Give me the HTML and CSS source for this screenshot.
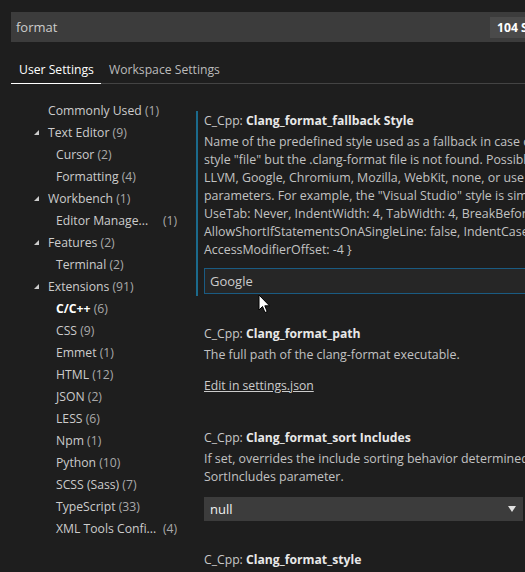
FILE: index.html
```html
<!DOCTYPE html>
<html lang="en">

<head>
    <meta charset="UTF-8">
    <title>Settings</title>
    <link rel="stylesheet" href="styles.css">
</head>

<body>

    <!-- search -->
    <div class="search">
        <div class="search_box">
            <span class="query">format</span>
            <span class="count">104 Settings found</span>
        </div>
    </div>

    <!-- tabs -->
    <div class="tabs">
        <div class="tab active">User Settings</div>
        <div class="tab">Workspace Settings</div>
    </div>

    <div class="main">

        <!-- tree -->
        <ul class="tree">
            <li class="lv1">Commonly Used <span class="num">(1)</span></li>
            <li class="lv1 open">Text Editor <span class="num">(9)</span></li>
            <li class="lv2">Cursor <span class="num">(2)</span></li>
            <li class="lv2">Formatting <span class="num">(4)</span></li>
            <li class="lv1 open">Workbench <span class="num">(1)</span></li>
            <li class="lv2"><span class="cut">Editor Manage...</span><span class="num">(1)</span></li>
            <li class="lv1 open">Features <span class="num">(2)</span></li>
            <li class="lv2">Terminal <span class="num">(2)</span></li>
            <li class="lv1 open">Extensions <span class="num">(91)</span></li>
            <li class="lv2 selected"><b>C/C++</b> <span class="num">(6)</span></li>
            <li class="lv2">CSS <span class="num">(9)</span></li>
            <li class="lv2">Emmet <span class="num">(1)</span></li>
            <li class="lv2">HTML <span class="num">(12)</span></li>
            <li class="lv2">JSON <span class="num">(2)</span></li>
            <li class="lv2">LESS <span class="num">(6)</span></li>
            <li class="lv2">Npm <span class="num">(1)</span></li>
            <li class="lv2">Python <span class="num">(10)</span></li>
            <li class="lv2">SCSS (Sass) <span class="num">(7)</span></li>
            <li class="lv2">TypeScript <span class="num">(33)</span></li>
            <li class="lv2"><span class="cut">XML Tools Confi...</span><span class="num">(4)</span></li>
        </ul>

        <!-- settings list -->
        <div class="settings">

            <div class="setting focused">
                <div class="title">C_Cpp: <b>Clang_format_fallback Style</b></div>
                <div class="desc">
                    Name of the predefined style used as a fallback in case clang-format is invoked with<br>
                    style "file" but the .clang-format file is not found. Possible values are Visual Studio,<br>
                    LLVM, Google, Chromium, Mozilla, WebKit, none, or use {key: value, ...} to set specific<br>
                    parameters. For example, the "Visual Studio" style is similar to: { BasedOnStyle: LLVM,<br>
                    UseTab: Never, IndentWidth: 4, TabWidth: 4, BreakBeforeBraces: Allman,<br>
                    AllowShortIfStatementsOnASingleLine: false, IndentCaseLabels: false, ColumnLimit: 0,<br>
                    AccessModifierOffset: -4 }
                </div>
                <div class="text_input">Google</div>
            </div>

            <div class="setting s2">
                <div class="title">C_Cpp: <b>Clang_format_path</b></div>
                <div class="desc">The full path of the clang-format executable.</div>
                <div class="link">Edit in settings.json</div>
            </div>

            <div class="setting s3">
                <div class="title">C_Cpp: <b>Clang_format_sort Includes</b></div>
                <div class="desc">
                    If set, overrides the include sorting behavior determined by the<br>
                    SortIncludes parameter.
                </div>
                <div class="select">
                    <span>null</span>
                    <span class="arrow"></span>
                </div>
            </div>

            <div class="setting">
                <div class="title">C_Cpp: <b>Clang_format_style</b></div>
            </div>

        </div>
    </div>

    <!-- mouse pointer -->
    <svg class="pointer" width="13" height="20" viewBox="0 0 13 20">
        <path d="M1 1 L1 16 L4.5 12.5 L7 18.5 L9.2 17.6 L6.8 11.8 L11.5 11.8 Z" fill="#fff" stroke="#000" stroke-width="1"/>
    </svg>

</body>

</html>
```

FILE: styles.css
```css
body {
    margin: 0;
    width: 525px;
    height: 572px;
    overflow: hidden;
    background-color: #1e1e1e;
    color: #cccccc;
    font-family: "Open Sans", "Noto Sans", sans-serif;
    font-size: 12.2px;
    position: relative;
}

/* search */
.search {
    padding: 12px 0 0 11px;
}

.search_box {
    width: 620px;
    height: 30px;
    background-color: #3c3c3c;
    display: flex;
    align-items: center;
}

.query {
    width: 474px;
    padding-left: 5px;
    font-size: 13px;
    color: #cccccc;
}

.count {
    height: 21px;
    line-height: 21px;
    padding: 0 7px;
    background-color: #4a4a4a;
    color: #ffffff;
    font-weight: bold;
    white-space: nowrap;
}

/* tabs */
.tabs {
    display: flex;
    margin: 14px 0 0 11px;
    border-bottom: 1px solid #444444;
}

.tab {
    height: 27px;
    line-height: 27px;
    padding: 0 7px 0 8px;
    font-size: 12.2px;
    color: #bbbbbb;
}

.tab.active {
    color: #ffffff;
    border-bottom: 1px solid #ffffff;
    margin-bottom: -1px;
}

/* layout */
.main {
    display: flex;
    padding-top: 16px;
}

/* tree */
.tree {
    list-style: none;
    margin: 0;
    padding: 0;
    width: 196px;
    flex: none;
}

.tree li {
    height: 22px;
    line-height: 22px;
    white-space: nowrap;
    position: relative;
}

.lv1 {
    padding-left: 48px;
}

.lv2 {
    padding-left: 56px;
}

.tree .open::before {
    content: "";
    position: absolute;
    left: 34px;
    top: 8px;
    border-left: 5px solid transparent;
    border-bottom: 5px solid #cccccc;
}

.num {
    color: #a9a9a9;
}

.cut {
    display: inline-block;
    width: 107px;
}

.selected b {
    color: #ffffff;
}

/* settings */
.settings {
    padding-top: 11px;
    white-space: nowrap;
}

.setting {
    border-left: 2px solid transparent;
    padding: 1px 0 2px 6px;
    margin-bottom: 28px;
}

.setting.focused {
    border-left-color: #1b6a8c;
}

.s2 {
    margin-bottom: 31px;
}

.s3 {
    margin-bottom: 27px;
}

.title {
    height: 18px;
    line-height: 18px;
    font-size: 12.2px;
    color: #c8c8c8;
}

.title b {
    color: #e8e8e8;
}

.desc {
    margin-top: 3px;
    line-height: 18px;
    font-size: 12.4px;
    color: #c2c2c2;
}

.text_input {
    margin-top: 9px;
    width: 340px;
    height: 24px;
    line-height: 24px;
    padding-left: 5px;
    border: 1px solid #1a5b82;
    background-color: #262626;
    font-size: 13px;
}

.link {
    margin-top: 13px;
    line-height: 18px;
    text-decoration: underline;
    color: #cccccc;
}

.select {
    margin-top: 11px;
    width: 306px;
    height: 24px;
    padding: 0 7px 0 6px;
    background-color: #3c3c3c;
    display: flex;
    align-items: center;
    justify-content: space-between;
    font-size: 13px;
    color: #f0f0f0;
}

.arrow {
    border-left: 4px solid transparent;
    border-right: 4px solid transparent;
    border-top: 6px solid #e0e0e0;
}

.pointer {
    position: absolute;
    left: 258px;
    top: 294px;
}
```
